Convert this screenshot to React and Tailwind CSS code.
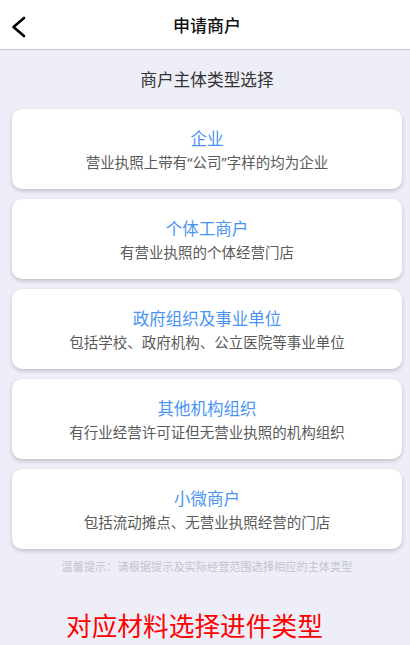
import React from "react";

const Q = ({ children }) => (
  <span style={{ fontFamily: '"Noto Sans", sans-serif' }}>{children}</span>
);

const items = [
  {
    t: "企业",
    d: (
      <>
        营业执照上带有<Q>“</Q>公司<Q>”</Q>字样的均为企业
      </>
    ),
  },
  { t: "个体工商户", d: "有营业执照的个体经营门店" },
  { t: "政府组织及事业单位", d: "包括学校、政府机构、公立医院等事业单位" },
  { t: "其他机构组织", d: "有行业经营许可证但无营业执照的机构组织" },
  { t: "小微商户", d: "包括流动摊点、无营业执照经营的门店" },
];

export default function App() {
  return (
    <div
      className="w-[410px] h-[645px] overflow-hidden bg-[#eeeef9] flex flex-col"
      style={{ fontFamily: '"Noto Sans CJK SC", "Noto Sans", sans-serif' }}
    >
      <div className="relative h-[50px] shrink-0 bg-white border-b border-[#c9c9d1] flex items-center justify-center pl-[4px]">
        <svg
          className="absolute left-[10px] top-[15px]"
          width="18"
          height="24"
          viewBox="0 0 18 24"
          fill="none"
        >
          <polyline
            points="14,3 3.5,12 14,21"
            stroke="#000"
            strokeWidth="2.6"
            strokeLinecap="round"
            strokeLinejoin="round"
          />
        </svg>
        <span className="text-[17px] font-medium text-[#111] leading-[24px]">申请商户</span>
      </div>

      <div className="flex flex-col pl-[4px]">
        <div className="pt-[17px] h-[41px] text-center text-[16.7px] leading-[24px] text-[#333]">
          商户主体类型选择
        </div>
        <div className="mt-[18px] mx-[8px] flex flex-col gap-[10px]">
          {items.map((it) => (
            <div
              key={it.t}
              className="h-[80px] bg-white rounded-[10px] shadow-[0_2px_4px_rgba(0,0,0,0.2)] flex flex-col items-center justify-center gap-[3px]"
            >
              <div className="text-[16.5px] leading-[22px] text-[#4a94f2]">{it.t}</div>
              <div className="text-[14.5px] leading-[20px] text-[#5a5a5a]">{it.d}</div>
            </div>
          ))}
        </div>
        <div className="mt-[9px] text-center text-[11.2px] leading-[16px] text-[#c3c3cc]">
          温馨提示：请根据提示及实际经营范围选择相应的主体类型
        </div>
        <div className="mt-[35px] pl-[62px] text-[25.7px] leading-[32px] text-[#ff0000]">
          对应材料选择进件类型
        </div>
      </div>
    </div>
  );
}
